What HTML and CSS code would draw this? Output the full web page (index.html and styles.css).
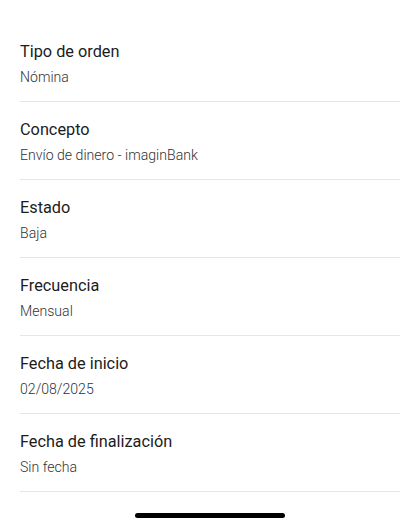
FILE: index.html
```html
<!DOCTYPE html>
<html lang="es">
<head>
<meta charset="utf-8">
<title>Detalle de orden</title>
<link rel="stylesheet" href="styles.css">
</head>
<body>
<main class="details">
  <div class="row">
    <div class="label">Tipo de orden</div>
    <div class="value">Nómina</div>
  </div>
  <div class="row">
    <div class="label">Concepto</div>
    <div class="value">Envío de dinero - imaginBank</div>
  </div>
  <div class="row">
    <div class="label">Estado</div>
    <div class="value">Baja</div>
  </div>
  <div class="row">
    <div class="label">Frecuencia</div>
    <div class="value">Mensual</div>
  </div>
  <div class="row">
    <div class="label">Fecha de inicio</div>
    <div class="value">02/08/2025</div>
  </div>
  <div class="row">
    <div class="label">Fecha de finalización</div>
    <div class="value">Sin fecha</div>
  </div>
</main>
<div class="home-bar"><span class="home-indicator"></span></div>
</body>
</html>
```

FILE: styles.css
```css
html, body {
  margin: 0;
  padding: 0;
  background: #ffffff;
}
body {
  width: 420px;
  height: 527px;
  overflow: hidden;
  font-family: Roboto, "Noto Sans", Arial, sans-serif;
}
.details {
  display: flex;
  flex-direction: column;
  padding: 24px 20px 0 20px;
}
.row {
  display: flex;
  flex-direction: column;
  gap: 3px;
  padding: 16px 0 14px 0;
  border-bottom: 1px solid #e6e6e6;
}
.label {
  font-size: 16.3px;
  line-height: 24px;
  color: #1c1c1c;
}
.value {
  font-size: 14.1px;
  font-weight: 300;
  line-height: 20px;
  color: #333333;
}
.home-bar {
  display: flex;
  justify-content: center;
  padding-top: 21px;
}
.home-indicator {
  width: 150px;
  height: 5px;
  border-radius: 3px;
  background: #000000;
}
```
